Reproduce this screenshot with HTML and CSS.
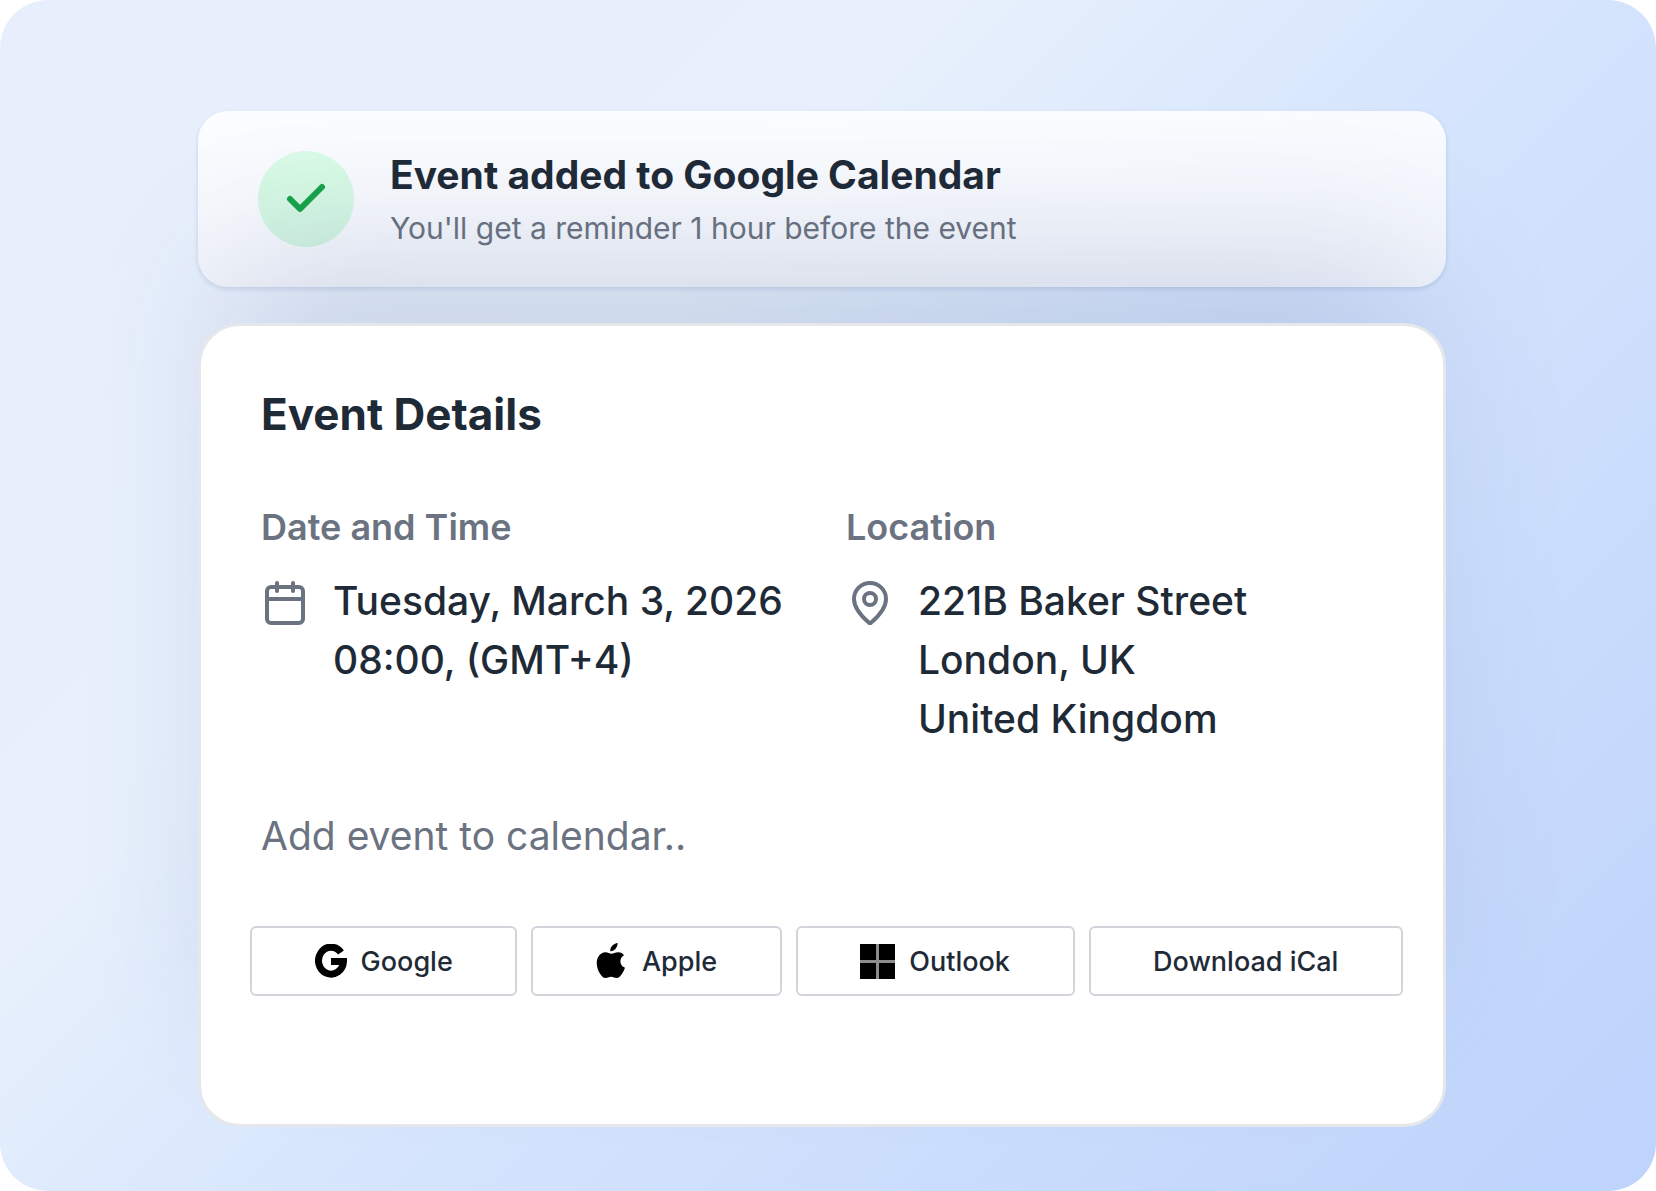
FILE: index.html
```html
<!DOCTYPE html>
<html lang="en">
<head>
  <meta charset="utf-8">
  <title>Event Details</title>
  <meta name="viewport" content="width=device-width, initial-scale=1">
  <link rel="stylesheet" href="styles.css">
</head>
<body>
  <main class="stage">
    <div class="toast" role="status">
      <div class="toast-icon">
        <svg width="48" height="48" viewBox="0 0 24 24" fill="none" stroke="currentColor" stroke-width="3" stroke-linecap="round" stroke-linejoin="round" aria-hidden="true">
          <path d="M20 6 9 17l-5-5"/>
        </svg>
      </div>
      <div class="toast-text">
        <p class="toast-title">Event added to Google Calendar</p>
        <p class="toast-note">You'll get a reminder 1 hour before the event</p>
      </div>
    </div>

    <section class="card">
      <div class="card-body">
        <h1 class="card-title">Event Details</h1>
        <div class="details">
          <div class="detail">
            <h2 class="detail-label">Date and Time</h2>
            <div class="detail-row">
              <svg class="detail-icon" width="48" height="48" viewBox="0 0 24 24" fill="none" stroke="currentColor" stroke-width="2" stroke-linecap="round" stroke-linejoin="round" aria-hidden="true">
                <path d="M8 2v4"/>
                <path d="M16 2v4"/>
                <rect width="18" height="18" x="3" y="4" rx="2"/>
                <path d="M3 10h18"/>
              </svg>
              <p class="detail-value">Tuesday, March 3, 2026<br>08:00, (GMT+4)</p>
            </div>
          </div>
          <div class="detail">
            <h2 class="detail-label">Location</h2>
            <div class="detail-row">
              <svg class="detail-icon" width="48" height="48" viewBox="0 0 24 24" fill="none" stroke="currentColor" stroke-width="2" stroke-linecap="round" stroke-linejoin="round" aria-hidden="true">
                <path d="M20 10c0 4.993-5.539 10.193-7.399 11.799a1 1 0 0 1-1.202 0C9.539 20.193 4 14.993 4 10a8 8 0 0 1 16 0"/>
                <circle cx="12" cy="10" r="3"/>
              </svg>
              <p class="detail-value">221B Baker Street<br>London, UK<br>United Kingdom</p>
            </div>
          </div>
        </div>
        <p class="hint">Add event to calendar..</p>
      </div>

      <div class="actions">
        <button class="btn" type="button">
          <svg width="32" height="34" viewBox="0 0 32 34" fill="none" stroke="currentColor" stroke-width="7" aria-hidden="true">
            <path d="M26 8.500A12.500 13.500 0 1 0 28.500 17.500H16"/>
          </svg>
          Google
        </button>
        <button class="btn" type="button">
          <svg width="32" height="36" viewBox="0 0 32 36" fill="currentColor" aria-hidden="true">
            <path d="M21.500 0c.3 2.200-.6 4.200-1.900 5.800-1.300 1.500-3.300 2.700-5.300 2.500-.3-2.100.7-4.200 1.900-5.500C17.500 1.300 19.700.2 21.500 0zM28 12.300c-2.300 1.400-3.600 3.400-3.600 6 0 3 1.800 5.400 4.600 6.500-.7 2-1.600 4-2.800 5.700-1.700 2.500-3.200 4.600-5.600 4.600-2.200 0-2.900-1.300-5.500-1.300s-3.500 1.300-5.600 1.300c-2.300 0-4-2.300-5.600-4.700C.9 25.700-.6 18.500 2.300 13.700c1.600-2.800 4.400-4.400 7.200-4.400 2.400 0 4.200 1.500 6 1.500 1.700 0 3.900-1.700 7-1.600 2.100.1 4.200 1.100 5.500 3.100z"/>
          </svg>
          Apple
        </button>
        <button class="btn" type="button">
          <svg width="35" height="35" viewBox="0 0 35 35" aria-hidden="true">
            <rect width="35" height="35" fill="#8c8c8c"/>
            <path d="M0 0h16v16H0zM19 0h16v16H19zM0 19h16v16H0zM19 19h16v16H19z"/>
          </svg>
          Outlook
        </button>
        <button class="btn" type="button">Download iCal</button>
      </div>
    </section>
  </main>
</body>
</html>
```
FILE: styles.css
```css
* {
  box-sizing: border-box;
}

body {
  margin: 0;
  background: #fff;
  color: #1f2a37;
  font-family: Inter, "Liberation Sans", sans-serif;
}

h1, h2, p {
  margin: 0;
}

.stage {
  min-height: 100vh;
  padding: 111px 210px 63px 198px;
  border-radius: 48px;
  background: linear-gradient(135deg, #e8effc 0%, #e7f0fc 34%, #d6e5fd 54%, #bfd4fc 96%, #bfd4fd 100%);
}

.toast {
  display: flex;
  align-items: center;
  gap: 36px;
  margin-bottom: 36px;
  padding: 36px 60px;
  border-radius: 30px;
  background: linear-gradient(rgba(255, 255, 255, 0.85), rgba(243, 245, 251, 0.9));
  box-shadow: 0 2px 5px rgba(30, 50, 110, 0.14);
}

.toast-icon {
  display: flex;
  flex: none;
  align-items: center;
  justify-content: center;
  width: 96px;
  height: 96px;
  border-radius: 50%;
  background: linear-gradient(#d9fbe6, #d0f2e0);
  color: #16a34a;
}

.toast-title {
  margin-bottom: 2px;
  font-size: 39px;
  font-weight: 700;
  line-height: 56px;
}

.toast-note {
  color: #6b7280;
  font-size: 30px;
  line-height: 46px;
}

/* the shadow is cast upwards, over the toast */
.card {
  position: relative;
  padding: 58px 40px 128px 49px;
  border: 3px solid #e5e7eb;
  border-radius: 42px;
  background: #fff;
  box-shadow: 0 -96px 150px -36px rgba(50, 75, 130, 0.17);
}

.card-body {
  padding: 0 11px;
}

.card-title {
  margin-bottom: 58px;
  font-size: 44px;
  font-weight: 700;
  line-height: 60px;
}

.details {
  display: grid;
  grid-template-columns: 1fr 1fr;
  gap: 39px;
  margin-bottom: 58px;
}

.detail-label {
  margin-bottom: 19px;
  color: #6b7280;
  font-size: 36px;
  font-weight: 600;
  line-height: 50px;
}

.detail-row {
  display: flex;
  align-items: flex-start;
  gap: 24px;
}

.detail-icon {
  flex: none;
  margin-top: 8px;
  color: #6b7280;
}

.detail-value {
  font-size: 39px;
  font-weight: 500;
  line-height: 59px;
  white-space: nowrap;
}

.hint {
  margin-bottom: 60px;
  color: #6b7280;
  font-size: 39px;
  line-height: 60px;
}

.actions {
  display: flex;
  gap: 14px;
}

.btn {
  display: flex;
  flex: 1 1 auto;
  align-items: center;
  justify-content: center;
  gap: 14px;
  height: 70px;
  padding: 0 60px;
  border: 2px solid #d1d5db;
  border-radius: 6px;
  background: #fff;
  color: #1f2a37;
  font-family: inherit;
  font-size: 27px;
  font-weight: 500;
  white-space: nowrap;
}

.btn svg {
  flex: none;
  color: #000;
}
```
